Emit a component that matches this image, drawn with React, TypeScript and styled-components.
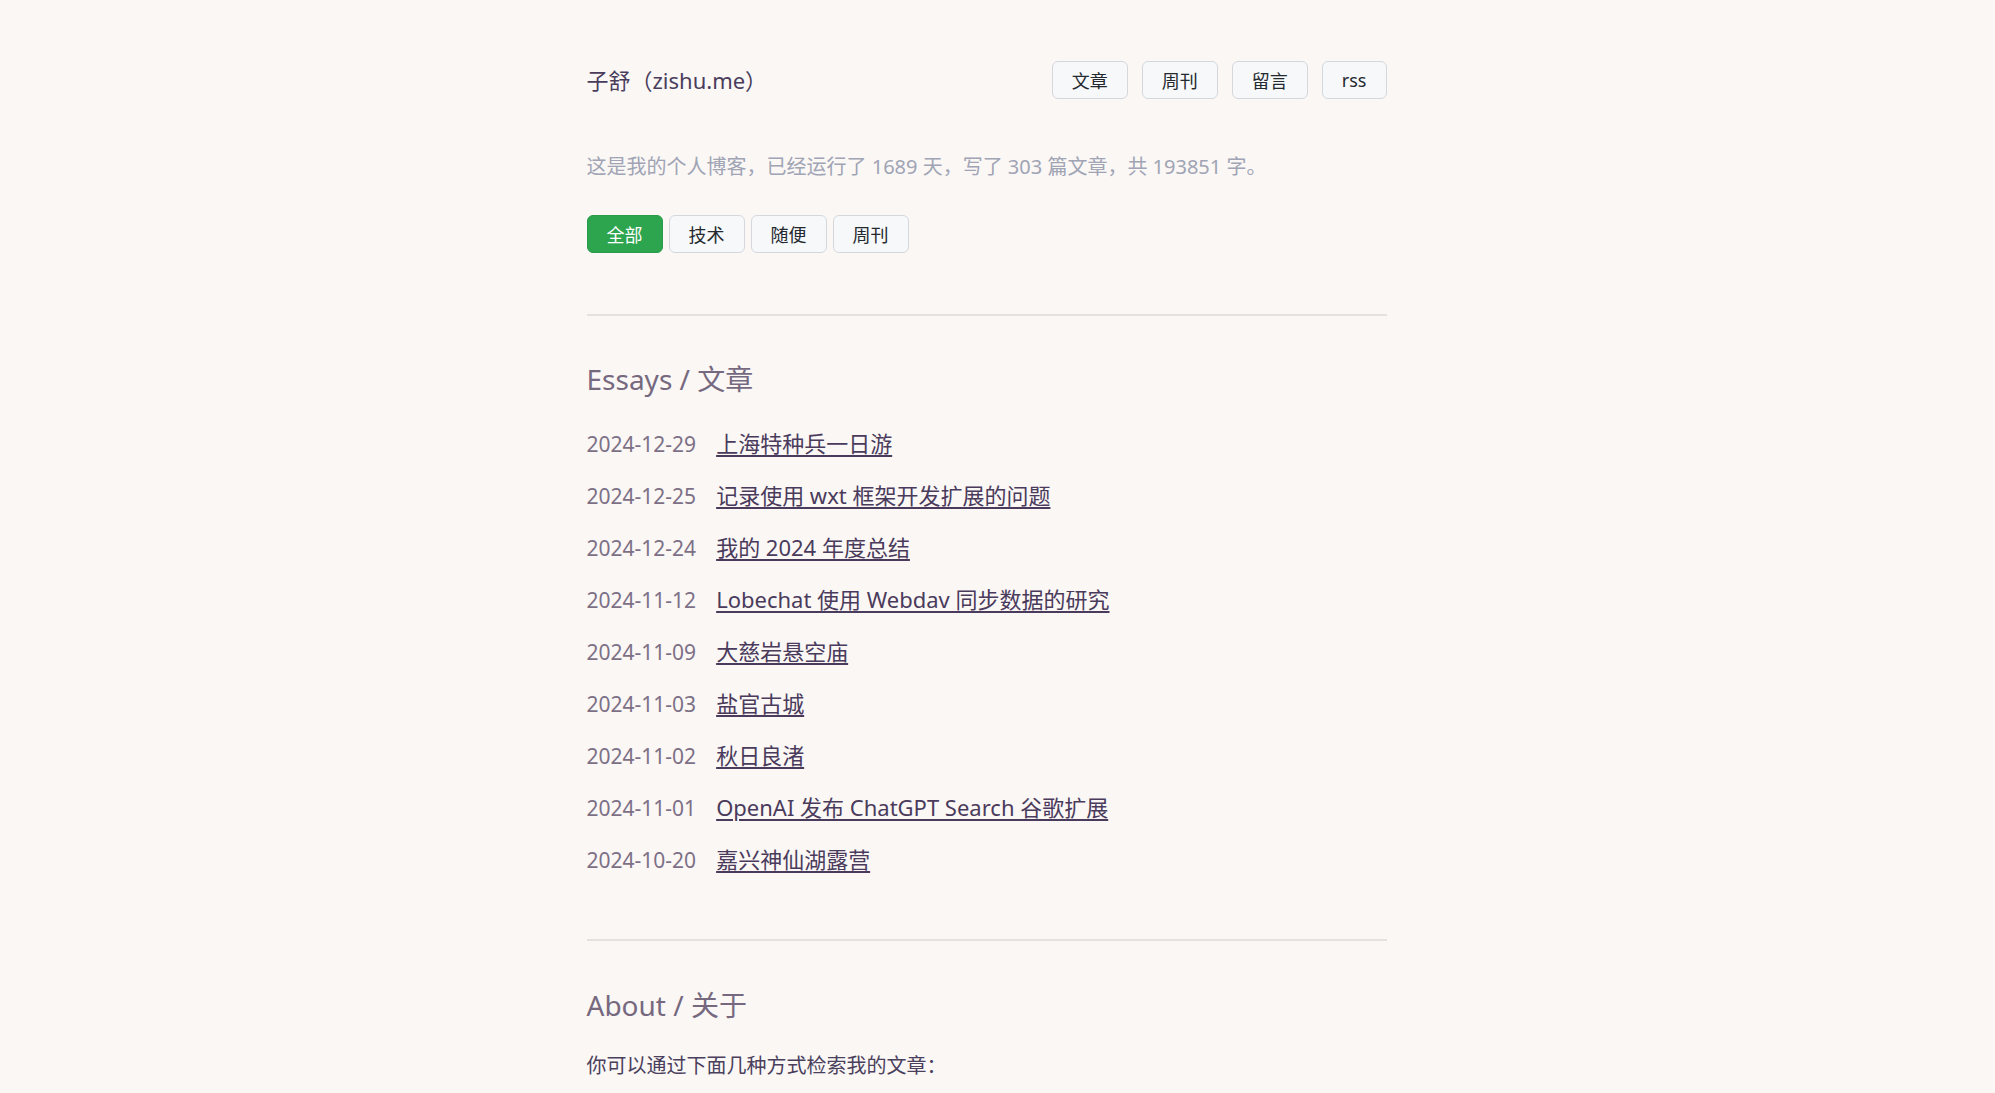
import React, { useState } from "react"
import styled, { createGlobalStyle } from "styled-components"

const GlobalStyle = createGlobalStyle`
    html, body {
        margin: 0;
        padding: 0;
        background: #faf7f5;
    }
    body {
        padding-right: 22px;
        font-family: "Noto Sans", "Noto Sans CJK SC", sans-serif;
        color: #4a3f5c;
    }
`

const Page = styled.div`
    max-width: 800px;
    margin: 0 auto;
    padding: 60px 0 120px;
`

const Header = styled.header`
    display: flex;
    align-items: center;
    justify-content: space-between;
    height: 39px;
`

const SiteTitle = styled.a`
    font-size: 22px;
    line-height: 30px;
    color: #4a3d5c;
    text-decoration: none;
`

const Nav = styled.nav`
    display: flex;
    gap: 14px;
`

const Button = styled.a<{ $active?: boolean }>`
    display: inline-flex;
    align-items: center;
    justify-content: center;
    box-sizing: border-box;
    height: 38px;
    padding: 0 19px;
    border-radius: 6px;
    border: 1px solid ${(p) => (p.$active ? "#2a9b49" : "#d4d8dd")};
    background: ${(p) => (p.$active ? "#2da44e" : "#f6f8fa")};
    color: ${(p) => (p.$active ? "#fff" : "#24292f")};
    font-size: 18px;
    text-decoration: none;
    cursor: pointer;
`

const Intro = styled.p`
    margin: 53px 0 0;
    font-size: 20px;
    line-height: 30px;
    color: #a0a4b4;
`

const Filters = styled.div`
    display: flex;
    gap: 6px;
    margin-top: 33px;
`

const Divider = styled.hr<{ $top: number }>`
    border: none;
    border-top: 2px solid #e5e1e0;
    margin: ${(p) => p.$top}px 0 0;
`

const SectionTitle = styled.h2<{ $top?: number }>`
    margin: ${(p) => p.$top ?? 43}px 0 0;
    font-size: 28px;
    line-height: 40px;
    font-weight: 400;
    color: #76697f;
`

const PostList = styled.ul`
    list-style: none;
    margin: 18px 0 0;
    padding: 0;
`

const PostRow = styled.li`
    display: flex;
    align-items: baseline;
    gap: 20px;
    height: 52px;
    line-height: 52px;
`

const PostDate = styled.span`
    font-size: 21px;
    color: #7d7086;
    flex-shrink: 0;
`

const PostLink = styled.a`
    font-size: 22px;
    color: #4a3b5c;
    text-decoration: underline;
    text-decoration-thickness: 2px;
    text-underline-offset: 3px;
`

const Paragraph = styled.p`
    margin: 26px 0 0;
    font-size: 20px;
    line-height: 30px;
    color: #4a3f5c;
`

const WayList = styled.ul`
    margin: 16px 0 0;
    padding-left: 28px;
    font-size: 20px;
    line-height: 40px;
`

const Footer = styled.footer`
    margin-top: 60px;
    font-size: 16px;
    color: #a0a4b4;
`

const posts = [
    { date: "2024-12-29", title: "上海特种兵一日游" },
    { date: "2024-12-25", title: "记录使用 wxt 框架开发扩展的问题" },
    { date: "2024-12-24", title: "我的 2024 年度总结" },
    { date: "2024-11-12", title: "Lobechat 使用 Webdav 同步数据的研究" },
    { date: "2024-11-09", title: "大慈岩悬空庙" },
    { date: "2024-11-03", title: "盐官古城" },
    { date: "2024-11-02", title: "秋日良渚" },
    { date: "2024-11-01", title: "OpenAI 发布 ChatGPT Search 谷歌扩展" },
    { date: "2024-10-20", title: "嘉兴神仙湖露营" },
]

const navItems = ["文章", "周刊", "留言", "rss"]
const filterItems = ["全部", "技术", "随便", "周刊"]

export default function App() {
    const [filter, setFilter] = useState("全部")

    return (
        <>
            <GlobalStyle />
            <Page>
                <Header>
                    <SiteTitle href="#">子舒（zishu.me）</SiteTitle>
                    <Nav>
                        {navItems.map((item) => (
                            <Button key={item} href="#">
                                {item}
                            </Button>
                        ))}
                    </Nav>
                </Header>

                <Intro>这是我的个人博客，已经运行了 1689 天，写了 303 篇文章，共 193851 字。</Intro>

                <Filters>
                    {filterItems.map((item) => (
                        <Button key={item} $active={filter === item} onClick={() => setFilter(item)}>
                            {item}
                        </Button>
                    ))}
                </Filters>

                <Divider $top={61} />

                <SectionTitle>Essays / 文章</SectionTitle>
                <PostList>
                    {posts.map((post) => (
                        <PostRow key={post.date + post.title}>
                            <PostDate>{post.date}</PostDate>
                            <PostLink href="#">{post.title}</PostLink>
                        </PostRow>
                    ))}
                </PostList>

                <Divider $top={54} />

                <SectionTitle $top={44}>About / 关于</SectionTitle>
                <Paragraph>你可以通过下面几种方式检索我的文章：</Paragraph>
                <WayList>
                    <li>按分类浏览：技术、随便、周刊</li>
                    <li>按年份归档查看全部文章</li>
                    <li>通过 rss 订阅最新更新</li>
                    <li>在留言板给我留言</li>
                </WayList>
                <Paragraph>欢迎交流，感谢你的来访。</Paragraph>

                <Footer>© 2020 - 2024 子舒（zishu.me）</Footer>
            </Page>
        </>
    )
}
